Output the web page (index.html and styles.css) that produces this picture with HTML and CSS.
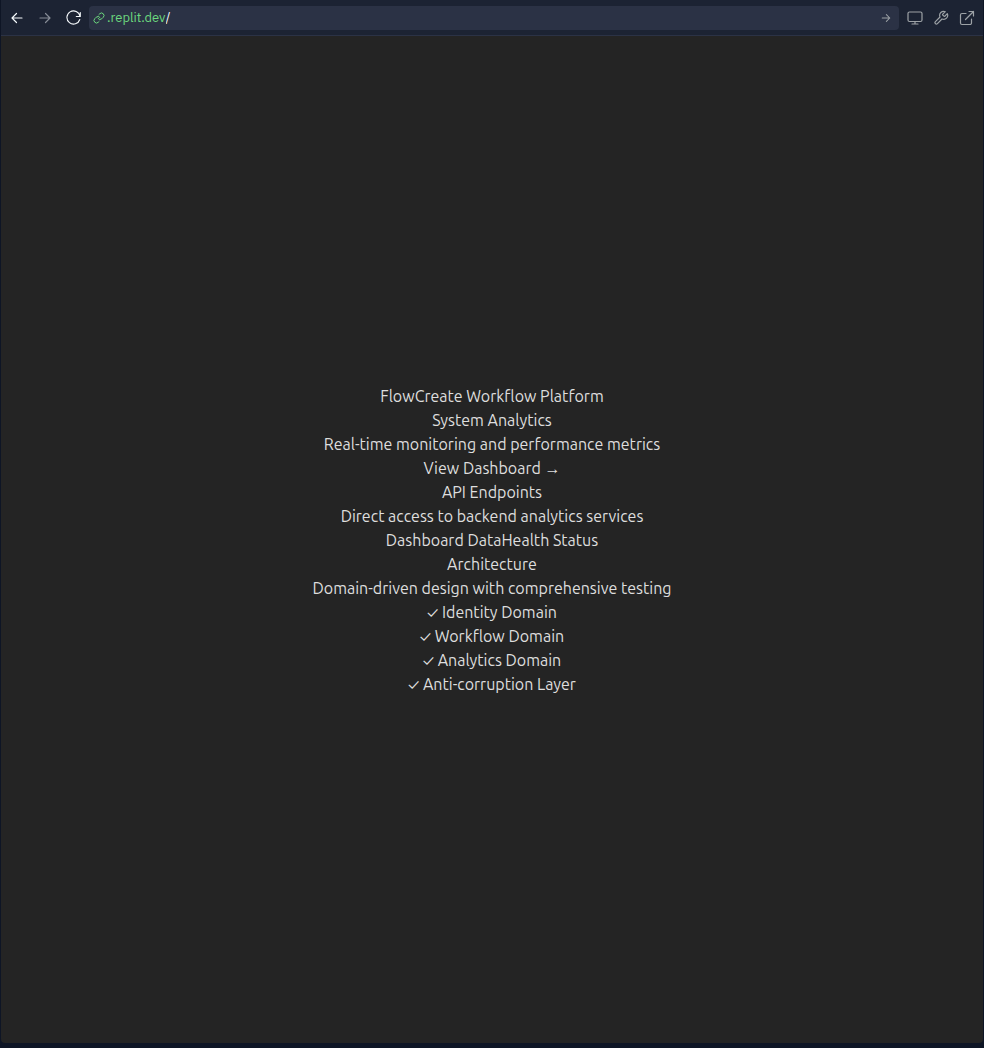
FILE: index.html
```html
<!DOCTYPE html>
<html lang="en">
<head>
<meta charset="utf-8">
<meta name="viewport" content="width=device-width, initial-scale=1">
<title>FlowCreate Workflow Platform</title>
<link rel="stylesheet" href="styles.css">
</head>
<body>
<header class="toolbar">
  <nav class="history" aria-label="History">
    <button class="icon-button" type="button" aria-label="Back">
      <svg class="icon" viewBox="0 0 16 16"><path d="M13 8H3M7.500 3.500 3 8l4.500 4.500"/></svg>
    </button>
    <button class="icon-button muted" type="button" aria-label="Forward">
      <svg class="icon" viewBox="0 0 16 16"><path d="M3 8h10M8.500 3.500 13 8l-4.500 4.500"/></svg>
    </button>
    <button class="icon-button" type="button" aria-label="Reload">
      <svg class="icon" viewBox="0 0 16 16"><path class="thin" d="M15.300 2.500v4h-4M15 6.300A6.600 6.600 0 1 0 14.800 9.500"/></svg>
    </button>
  </nav>
  <form class="address">
    <svg class="link-icon" viewBox="0 0 24 24" aria-hidden="true"><path d="M10 13a5 5 0 0 0 7.540.540l3-3a5 5 0 0 0-7.070-7.070l-1.720 1.710"/><path d="M14 11a5 5 0 0 0-7.540-.540l-3 3a5 5 0 0 0 7.070 7.070l1.710-1.710"/></svg>
    <label class="host" for="path">.replit.dev</label>
    <input class="path" id="path" type="text" value="/">
    <button class="go" type="submit" aria-label="Go">
      <svg class="go-icon" viewBox="0 0 16 16"><path d="M3 8h10M8.500 3.500 13 8l-4.500 4.500"/></svg>
    </button>
  </form>
  <div class="tools">
    <button class="icon-button gray" type="button" aria-label="Device size">
      <svg class="icon" viewBox="0 0 16 16"><rect x="1" y="2" width="14" height="9.500" rx="1.500"/><path d="M8 11.500V14M5 14h6"/></svg>
    </button>
    <button class="icon-button gray" type="button" aria-label="Developer tools">
      <svg class="icon" viewBox="0 0 24 24"><path class="wide" d="M14.700 6.300a1 1 0 0 0 0 1.400l1.600 1.600a1 1 0 0 0 1.400 0l3.770-3.770a6 6 0 0 1-7.940 7.940l-6.910 6.910a2.120 2.120 0 0 1-3-3l6.910-6.910a6 6 0 0 1 7.940-7.940l-3.760 3.760z"/></svg>
    </button>
    <button class="icon-button gray" type="button" aria-label="Open in new tab">
      <svg class="icon" viewBox="0 0 16 16"><path d="M7 3.500H3A1.500 1.500 0 0 0 1.500 5v8A1.500 1.500 0 0 0 3 14.500h8a1.500 1.500 0 0 0 1.500-1.500V9M10 1.500h4.500V6M14.500 1.500 6.500 9.500"/></svg>
    </button>
  </div>
</header>
<main class="preview">
  <div class="content">
    <h1>FlowCreate Workflow Platform</h1>
    <h2>System Analytics</h2>
    <p>Real-time monitoring and performance metrics</p>
    <p><a href="#dashboard">View Dashboard →</a></p>
    <h2>API Endpoints</h2>
    <p>Direct access to backend analytics services</p>
    <p><a href="#data">Dashboard Data</a><a href="#health">Health Status</a></p>
    <h2>Architecture</h2>
    <p>Domain-driven design with comprehensive testing</p>
    <ul>
      <li>✓ Identity Domain</li>
      <li>✓ Workflow Domain</li>
      <li>✓ Analytics Domain</li>
      <li>✓ Anti-corruption Layer</li>
    </ul>
  </div>
</main>
</body>
</html>
```
FILE: styles.css
```css
* {
  box-sizing: border-box;
}

body {
  display: flex;
  flex-direction: column;
  min-height: 100vh;
  margin: 0;
  padding: 0 1px 5px;
  background: #0e1525;
  font-family: Ubuntu, "Noto Sans", sans-serif;
}

.toolbar {
  display: flex;
  align-items: center;
  gap: 4px;
  height: 36px;
  padding: 0 4px 0 3px;
  background: #1c2333;
  border-bottom: 1px solid #2b3245;
}

.history {
  display: flex;
  gap: 4px;
  padding-right: 1px;
}

.tools {
  display: flex;
  gap: 2px;
}

button {
  display: flex;
  align-items: center;
  justify-content: center;
  margin: 0;
  padding: 0;
  border: 0;
  background: none;
  color: #f5f9fc;
}

.icon-button {
  width: 24px;
  height: 24px;
}

.history .icon-button {
  padding-left: 2px;
}

.icon-button.muted {
  color: #868b96;
}

.icon-button.gray {
  color: #9da2a6;
}

svg {
  flex: none;
  fill: none;
  stroke: currentColor;
  stroke-linecap: round;
  stroke-linejoin: round;
}

.icon {
  width: 16px;
  height: 16px;
  stroke-width: 1.2;
}

.thin {
  stroke-width: 1.1;
}

.wide {
  stroke-width: 1.8;
}

.address {
  display: flex;
  flex: 1;
  align-items: center;
  min-width: 0;
  height: 24px;
  padding: 0 4px;
  border-radius: 4px;
  background: #2b3245;
  font: 13px/20px "IBM Plex Sans", "Noto Sans", sans-serif;
}

.link-icon {
  width: 12px;
  height: 12px;
  margin-right: 2px;
  color: #6cd97e;
  stroke-width: 2;
}

.host {
  color: #6cd97e;
}

.path {
  flex: 1;
  min-width: 0;
  padding: 0;
  border: 0;
  outline: 0;
  background: none;
  color: #f5f9fc;
  font: inherit;
}

.go {
  width: 18px;
  height: 20px;
  color: #9da2a6;
}

.go-icon {
  width: 12px;
  height: 12px;
  stroke-width: 1.4;
}

.preview {
  display: flex;
  flex: 1;
  align-items: center;
  justify-content: center;
  border-radius: 0 0 4px 4px;
  background: #242424;
  color: #dedede;
  font-size: 16px;
  line-height: 24px;
  text-align: center;
}

.content h1,
.content h2,
.content p,
.content ul {
  margin: 0;
  padding: 0;
  font-size: inherit;
  font-weight: 400;
  list-style: none;
}

.content a {
  color: inherit;
  text-decoration: none;
}
```
